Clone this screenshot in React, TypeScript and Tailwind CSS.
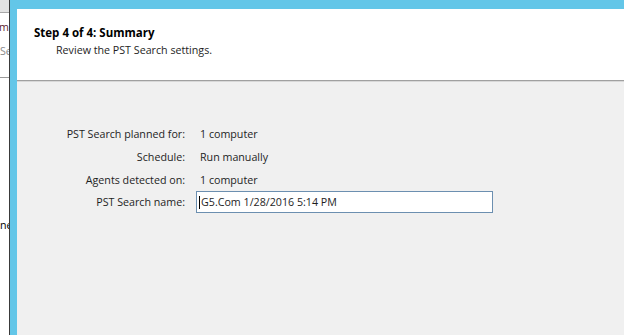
import React from "react";

const font = { fontFamily: '"Open Sans", "Noto Sans", sans-serif' };

export default function App() {
  const rows: [string, string][] = [
    ["PST Search planned for:", "1 computer"],
    ["Schedule:", "Run manually"],
    ["Agents detected on:", "1 computer"],
  ];
  return (
    <div className="flex h-[335px] w-[624px] overflow-hidden bg-white text-[10.7px] text-[#1e1e1e]" style={font}>
      {/* background app strip */}
      <div className="flex w-[9px] shrink-0 flex-col overflow-hidden bg-white">
        <div className="h-[13px] shrink-0 border-b border-[#a8a8a8] bg-[#e3e3e3]" />
        <div className="mt-[6px] flex h-[14px] justify-end whitespace-nowrap text-[#5b1c30]">m</div>
        <div className="mt-[10px] flex h-[14px] justify-start whitespace-nowrap text-[#8a8a8a]">Se</div>
        <div className="mt-[20px] h-[1px] bg-[#9a9a9a]" />
        <div className="mt-[139px] flex h-[14px] justify-start whitespace-nowrap text-black">ne</div>
      </div>
      {/* window frame */}
      <div className="flex flex-1 flex-col border-l border-[#3a3a3a] bg-[#63c6e8] pl-[7px] pt-[9px]">
        <div className="flex flex-1 flex-col bg-[#f0f0f0]">
          <div className="h-[71px] shrink-0 bg-white pl-[17px] pt-[16px]">
            <div className="text-[11.5px] font-bold leading-[15px] text-black">Step 4 of 4: Summary</div>
            <div className="mt-[3px] pl-[22px] leading-[15px]">Review the PST Search settings.</div>
          </div>
          <div className="h-[1px] bg-[#a0a0a0]" />
          <div className="h-[1px] bg-[#d8d8d8]" />
          <div className="flex flex-col pt-[45px]">
            {rows.map(([k, v], i) => (
              <div key={k} className={`flex h-[15px] items-center leading-[15px] ${i > 0 ? "mt-[8px]" : ""}`}>
                <div className="w-[168px] shrink-0 text-right">{k}</div>
                <div className="pl-[15px]">{v}</div>
              </div>
            ))}
            <div className="mt-[3px] flex items-center leading-[15px]">
              <div className="w-[168px] shrink-0 text-right">PST Search name:</div>
              <div className="ml-[11px] flex h-[22px] w-[297px] items-center border border-[#6c8fb0] bg-white pl-[2px]">
                <span className="mr-[1px] inline-block h-[13px] w-[1px] bg-black" />
                <span>G5.Com 1/28/2016 5:14 PM</span>
              </div>
            </div>
          </div>
        </div>
      </div>
    </div>
  );
}
